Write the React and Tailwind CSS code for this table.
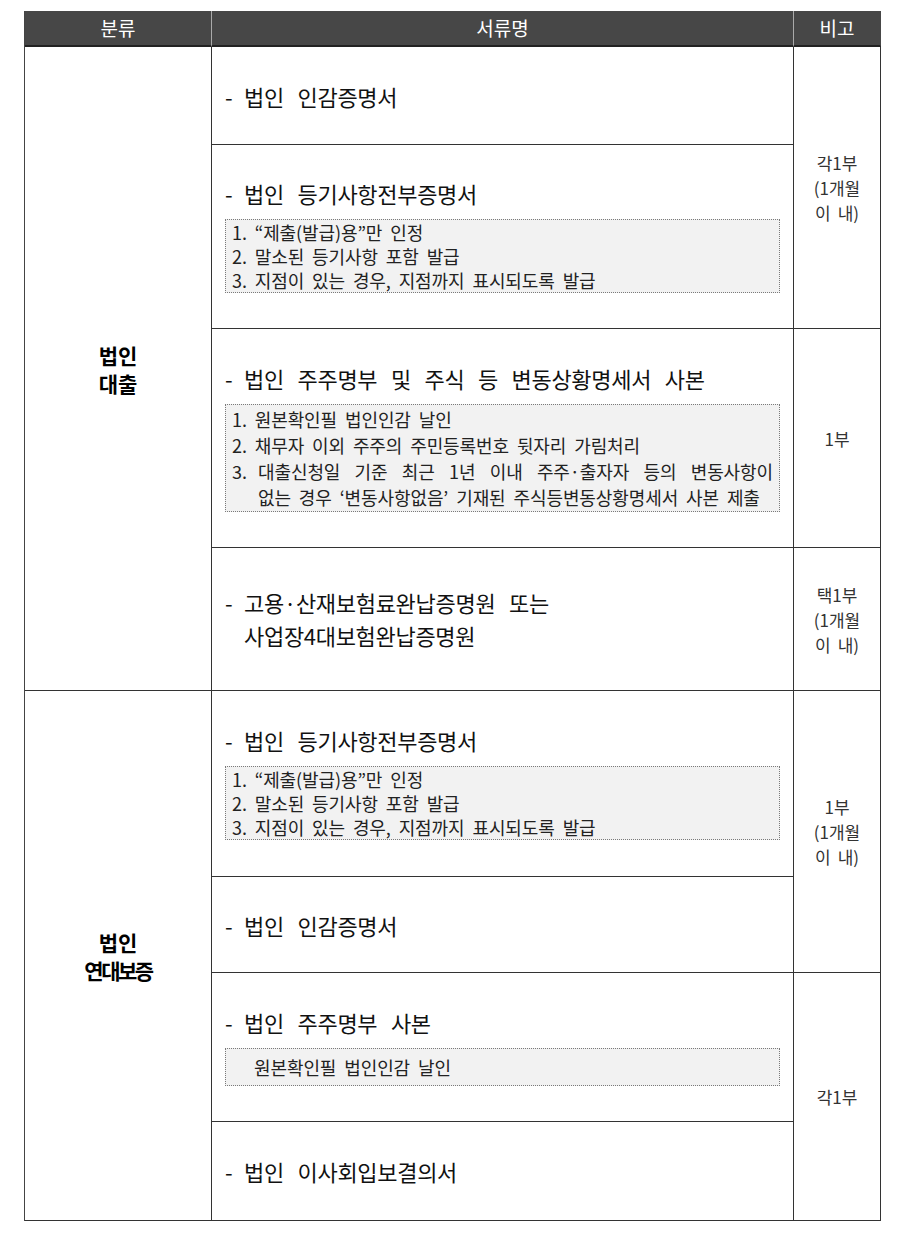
import React from "react";

const kr = "font-['Noto_Sans_CJK_KR','Noto_Sans_CJK_SC',sans-serif]";

const Title = ({ children }) => (
  <div className="flex text-[22px] leading-[26px] tracking-[-0.3px] text-[#111] [word-spacing:9px]">
    <span className="w-[19px] shrink-0">-</span>
    <div>{children}</div>
  </div>
);

const Box = ({ children, cls = "" }) => (
  <div
    className={`mt-[13px] border border-dotted border-[#7a7a7a] bg-[#f2f2f2] px-[6px] text-[18px] tracking-[-0.1px] text-[#222] [word-spacing:4px] ${cls}`}
  >
    {children}
  </div>
);

const Cell = ({ children, cls = "" }) => (
  <div className={`border-r border-b border-[#333] ${cls}`}>{children}</div>
);

const Mid = ({ children, cls = "" }) => (
  <Cell cls={`flex flex-col justify-center px-[13px] ${cls}`}>{children}</Cell>
);

const noteCls =
  "flex flex-col items-center justify-center text-[17px] leading-[25px] text-[#333]";

const Within = () => (
  <span>
    이<span className="ml-[7px]">내)</span>
  </span>
);

const App = () => {
  return (
    <div className={`w-[909px] h-[1238px] bg-white pt-[11px] pl-[24px] ${kr}`}>
      <div className="grid w-[857px] grid-cols-[187px_582px_87px] grid-rows-[36px_98px_184px_219px_143px_186px_96px_149px_99px] border-l border-[#444]">
        {/* header */}
        <div className="flex items-center justify-center bg-[#474747] border-r border-[#aaa] border-b-2 border-b-[#222] text-[19px] text-white">
          분류
        </div>
        <div className="flex items-center justify-center bg-[#474747] border-r border-[#aaa] border-b-2 border-b-[#222] text-[19px] text-white">
          서류명
        </div>
        <div className="flex items-center justify-center bg-[#474747] border-r border-[#474747] border-b-2 border-b-[#222] text-[19px] text-white">
          비고
        </div>

        {/* 법인 대출 */}
        <Cell cls="col-start-1 row-start-2 row-span-4 flex flex-col items-center justify-center text-[21px] font-bold leading-[28px] text-black">
          <span>법인</span>
          <span>대출</span>
        </Cell>

        <Mid cls="col-start-2 row-start-2">
          <Title>법인 인감증명서</Title>
        </Mid>
        <Mid cls="col-start-2 row-start-3">
          <Title>법인 등기사항전부증명서</Title>
          <Box cls="leading-[24px]">
            <div>1. “제출(발급)용”만 인정</div>
            <div>2. 말소된 등기사항 포함 발급</div>
            <div>3. 지점이 있는 경우, 지점까지 표시되도록 발급</div>
          </Box>
        </Mid>
        <Mid cls="col-start-2 row-start-4">
          <Title>법인 주주명부 및 주식 등 변동상황명세서 사본</Title>
          <Box cls="leading-[26px] py-[1px]">
            <div>1. 원본확인필 법인인감 날인</div>
            <div>2. 채무자 이외 주주의 주민등록번호 뒷자리 가림처리</div>
            <div className="flex">
              <span className="w-[26px] shrink-0">3.</span>
              <div className="flex-1">
                <div className="[text-align-last:justify]">
                  대출신청일 기준 최근 1년 이내 주주·출자자 등의 변동사항이
                </div>
                <div className="whitespace-nowrap">
                  없는 경우 ‘변동사항없음’ 기재된 주식등변동상황명세서 사본 제출
                </div>
              </div>
            </div>
          </Box>
        </Mid>
        <Mid cls="col-start-2 row-start-5">
          <div className="flex text-[22px] leading-[33px] tracking-[-0.3px] text-[#111] [word-spacing:9px]">
            <span className="w-[19px] shrink-0">-</span>
            <div>
              <div>고용·산재보험료완납증명원 또는</div>
              <div>사업장4대보험완납증명원</div>
            </div>
          </div>
        </Mid>

        <Cell cls={`col-start-3 row-start-2 row-span-2 ${noteCls}`}>
          <span>각1부</span>
          <span>(1개월</span>
          <Within />
        </Cell>
        <Cell cls={`col-start-3 row-start-4 ${noteCls}`}>
          <span>1부</span>
        </Cell>
        <Cell cls={`col-start-3 row-start-5 ${noteCls}`}>
          <span>택1부</span>
          <span>(1개월</span>
          <Within />
        </Cell>

        {/* 법인 연대보증 */}
        <Cell cls="col-start-1 row-start-6 row-span-4 flex flex-col items-center justify-center text-[21px] font-bold leading-[28px] text-black">
          <span>법인</span>
          <span className="tracking-[-2.5px]">연대보증</span>
        </Cell>

        <Mid cls="col-start-2 row-start-6">
          <Title>법인 등기사항전부증명서</Title>
          <Box cls="leading-[24px]">
            <div>1. “제출(발급)용”만 인정</div>
            <div>2. 말소된 등기사항 포함 발급</div>
            <div>3. 지점이 있는 경우, 지점까지 표시되도록 발급</div>
          </Box>
        </Mid>
        <Mid cls="col-start-2 row-start-7">
          <Title>법인 인감증명서</Title>
        </Mid>
        <Mid cls="col-start-2 row-start-8">
          <Title>법인 주주명부 사본</Title>
          <Box cls="leading-[24px] py-[6px] pl-[28px]">
            <div>원본확인필 법인인감 날인</div>
          </Box>
        </Mid>
        <Mid cls="col-start-2 row-start-9">
          <Title>법인 이사회입보결의서</Title>
        </Mid>

        <Cell cls={`col-start-3 row-start-6 row-span-2 ${noteCls}`}>
          <span>1부</span>
          <span>(1개월</span>
          <Within />
        </Cell>
        <Cell cls={`col-start-3 row-start-8 row-span-2 ${noteCls}`}>
          <span>각1부</span>
        </Cell>
      </div>
    </div>
  );
};

export default App;
